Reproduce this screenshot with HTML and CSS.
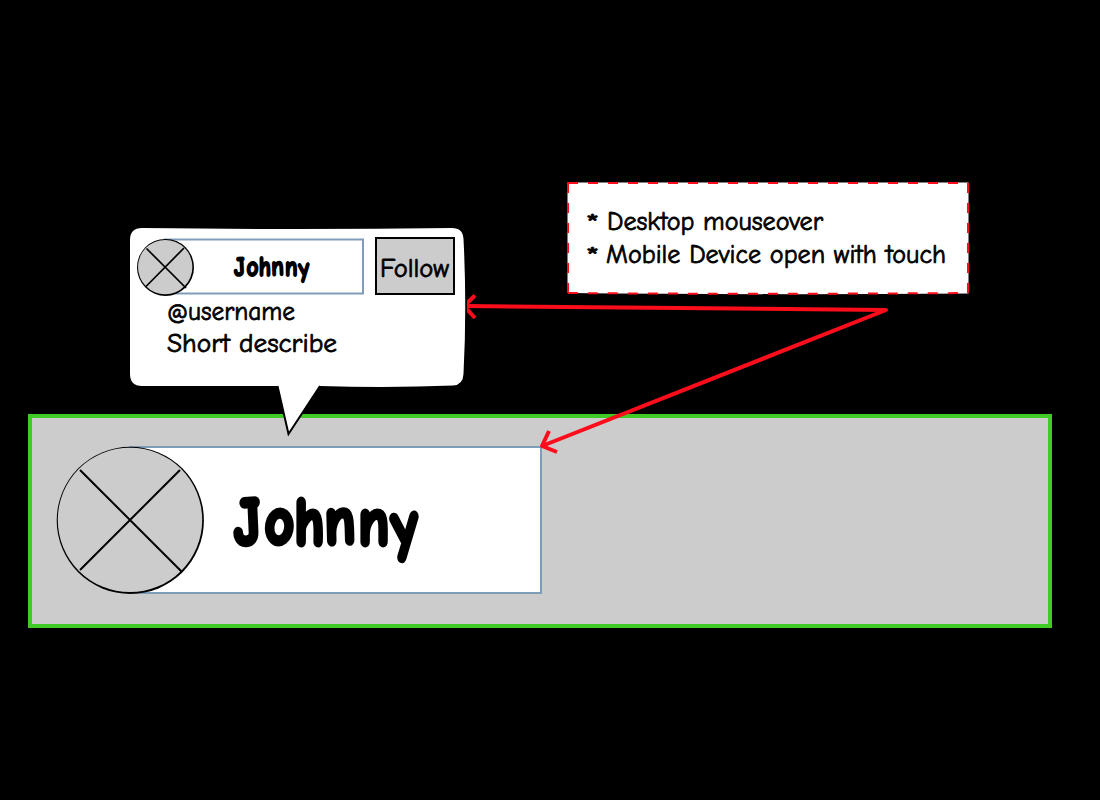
FILE: index.html
```html
<!DOCTYPE html>
<html lang="en">
<head>
<meta charset="utf-8">
<title>Profile hover card</title>
<link rel="stylesheet" href="styles.css">
</head>
<body>
<main class="canvas">
  <section class="panel">
    <svg class="art profile" viewBox="52 442 494 156" width="494" height="156">
      <path class="name-box" d="M130 447H541V593H130Z"/>
      <circle class="rim" cx="130.300" cy="520.400" r="73.600"/>
      <circle class="disc" cx="130" cy="519.900" r="72.200"/>
      <path class="ink" d="M80 470L181.500 571.500M180 470L80 570"/>
      <text class="brush" transform="translate(234 545) scale(.83 1)" x="1 37 73 110 150 192" y="0 -1 0 -1 0 4" rotate="-3 0 0 -2 0 -5">Johnny</text>
    </svg>
  </section>

  <section class="callout">
    <svg class="art" viewBox="125 222 345 220" width="345" height="220">
      <path class="bubble" d="M142 228Q300 230 452 228Q463 228 463.500 239Q467 307 463.500 374Q463 385 453 385.500Q390 388 320 386L289 434L277.500 386H142Q130 386 130 374V240Q130 228 142 228Z"/>
      <path class="tail" d="M277.500 386L288.500 434L320 386"/>
      <path class="name-box" d="M165 239.500H363V293.500H165Z"/>
      <circle class="rim" cx="165.500" cy="267.400" r="28.500"/>
      <circle class="disc" cx="165.200" cy="267.100" r="27.200"/>
      <path class="ink small" d="M146.500 248.500L186 288M184 248L146 286.500"/>
      <text class="brush" transform="translate(234 276) scale(.34 .4)" x="1 37 73 110 150 192" y="0 -1 0 -1 0 4" rotate="-3 0 0 -2 0 -5">Johnny</text>
      <rect class="button" x="376" y="238" width="78" height="56"/>
      <text class="copy" x="380" y="276.500" textLength="69" lengthAdjust="spacingAndGlyphs">Follow</text>
      <text class="copy" x="167" y="320" textLength="128" lengthAdjust="spacingAndGlyphs">@username</text>
      <text class="copy" x="167" y="352" textLength="170" lengthAdjust="spacingAndGlyphs">Short describe</text>
    </svg>
  </section>

  <aside class="note">
    <svg class="art" viewBox="563 178 410 120" width="410" height="120">
      <path class="paper" d="M567.500 182.500H968.500V293.500Q760 295 567.500 293Z"/>
      <path class="dashes" d="M568 183H968V293.500"/>
      <path class="dashes" d="M568 293Q760 294.500 968 293"/>
      <path class="dashes" d="M568 183V293"/>
      <text class="copy" x="585.500" y="232" textLength="14" lengthAdjust="spacingAndGlyphs">*</text>
      <text class="copy" x="607" y="230" textLength="216" lengthAdjust="spacingAndGlyphs">Desktop mouseover</text>
      <text class="copy" x="585.500" y="265" textLength="14" lengthAdjust="spacingAndGlyphs">*</text>
      <text class="copy" x="606" y="263" textLength="340" lengthAdjust="spacingAndGlyphs">Mobile Device open with touch</text>
    </svg>
  </aside>

  <svg class="art arrows" viewBox="467 290 426 168" width="426" height="168">
    <path d="M466 306L886 310L542 446"/>
    <path d="M475 295.500L464 306L475 318"/>
    <path d="M549 431L542 446L557 452"/>
  </svg>
</main>
</body>
</html>
```
FILE: styles.css
```css
body {
  margin: 0;
  background: #000;
}

.canvas {
  position: relative;
  width: 1100px;
  height: 800px;
  overflow: hidden;
  background: #000;
}

.art {
  display: block;
}

.panel {
  position: absolute;
  left: 28px;
  top: 414px;
  box-sizing: border-box;
  width: 1024px;
  height: 214px;
  padding: 24px 20px;
  border: 4px solid #3fca25;
  background: #ccc;
}

.callout {
  position: absolute;
  left: 125px;
  top: 222px;
}

.note {
  position: absolute;
  left: 563px;
  top: 178px;
}

.arrows {
  position: absolute;
  left: 467px;
  top: 290px;
  fill: none;
  stroke: #fc0d1b;
  stroke-width: 4;
  stroke-linejoin: round;
}

.name-box {
  fill: #fff;
  stroke: #7f9db9;
  stroke-width: 2;
}

.rim {
  fill: #000;
}

.disc {
  fill: #ccc;
}

.ink,
.tail {
  fill: none;
  stroke: #000;
  stroke-width: 2;
}

.small {
  stroke-width: 1.7;
}

.bubble,
.paper {
  fill: #fff;
}

.button {
  fill: #ccc;
  stroke: #000;
  stroke-width: 2;
}

.dashes {
  fill: none;
  stroke: #fc0d1b;
  stroke-width: 2;
  stroke-dasharray: 10 10;
}

.copy {
  font: 27px "Comic Sans MS", "Comic Neue", "Noto Sans", sans-serif;
  font-variant-ligatures: none;
  fill: #000;
  stroke: #000;
  stroke-width: 0.8;
  stroke-linejoin: round;
}

.brush {
  font: 700 68px "Comic Sans MS", "Comic Neue", Lato, sans-serif;
  fill: #000;
  stroke: #000;
  stroke-width: 5;
  stroke-linejoin: round;
}
```
